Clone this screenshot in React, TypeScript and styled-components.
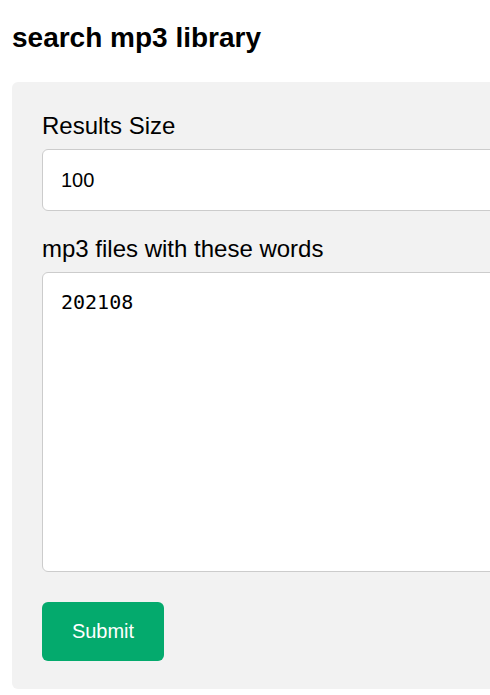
import React from "react";
import styled, { createGlobalStyle } from "styled-components";

const GlobalStyle = createGlobalStyle`
  html, body {
    margin: 0;
    padding: 0;
    background: #ffffff;
    overflow-x: hidden;
  }
  body {
    font-family: "Liberation Sans", Arial, sans-serif;
    color: #000;
  }
  *, *::before, *::after { box-sizing: border-box; }
`;

const Page = styled.main`
  padding: 22px 0 6px 12px;
  width: 600px;
`;

const Title = styled.h2`
  margin: 0 0 28px;
  font-size: 28px;
  font-weight: 700;
  line-height: 32px;
`;

const Panel = styled.form`
  width: 560px;
  background: #f2f2f2;
  border-radius: 6px;
  padding: 30px 30px 28px;
  display: flex;
  flex-direction: column;
`;

const Field = styled.div<{ $gap?: number }>`
  display: flex;
  flex-direction: column;
  margin-bottom: ${(p) => p.$gap ?? 0}px;
`;

const Label = styled.label`
  font-size: 24px;
  line-height: 27px;
  margin-bottom: 10px;
  color: #000;
`;

const TextInput = styled.input`
  height: 62px;
  width: 100%;
  padding: 0 18px;
  border: 1px solid #cccccc;
  border-radius: 6px;
  background: #fff;
  font-family: "Liberation Sans", Arial, sans-serif;
  font-size: 20px;
  color: #000;
  outline: none;
`;

const TextArea = styled.textarea`
  height: 300px;
  width: 100%;
  padding: 18px;
  border: 1px solid #cccccc;
  border-radius: 6px;
  background: #fff;
  font-family: "DejaVu Sans Mono", monospace;
  font-size: 20px;
  line-height: 23px;
  color: #000;
  resize: none;
  outline: none;
`;

const SubmitButton = styled.button`
  align-self: flex-start;
  width: 122px;
  height: 59px;
  border: none;
  border-radius: 6px;
  background: #04aa6d;
  color: #ffffff;
  font-family: "Liberation Sans", Arial, sans-serif;
  font-size: 20px;
  cursor: pointer;
`;

export default function App() {
  return (
    <>
      <GlobalStyle />
      <Page>
        <Title>search mp3 library</Title>
        <Panel onSubmit={(e) => e.preventDefault()}>
          <Field $gap={24}>
            <Label htmlFor="size">Results Size</Label>
            <TextInput id="size" type="text" defaultValue="100" />
          </Field>
          <Field $gap={30}>
            <Label htmlFor="words">mp3 files with these words</Label>
            <TextArea id="words" defaultValue="202108" />
          </Field>
          <SubmitButton type="submit">Submit</SubmitButton>
        </Panel>
      </Page>
    </>
  );
}
